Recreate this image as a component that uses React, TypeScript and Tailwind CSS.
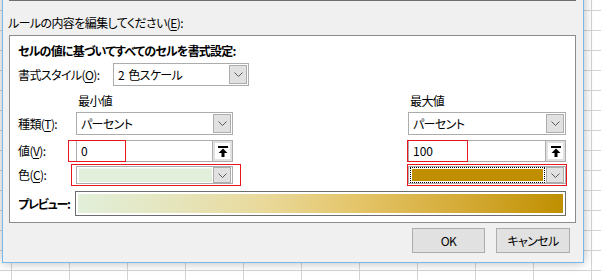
import React from "react";

const Chevron = () => (
  <svg width="9" height="5" viewBox="0 0 9 5">
    <path d="M0.5 0.5 L4.5 4.5 L8.5 0.5" fill="none" stroke="#5a5a5a" strokeWidth="1" />
  </svg>
);

const UpArrow = () => (
  <svg width="10" height="11" viewBox="0 0 10 11">
    <rect x="0" y="0" width="10" height="2" fill="#000" />
    <path d="M5 2.5 L9.5 7 L6.5 7 L6.5 11 L3.5 11 L3.5 7 L0.5 7 Z" fill="#000" />
  </svg>
);

function DropBtn({ h }: { h: string }) {
  return (
    <div className={`w-[18px] ${h} shrink-0 bg-[#e1e1e1] border border-[#adadad] flex items-center justify-center`}>
      <Chevron />
    </div>
  );
}

function Select({ w, children }: { w: string; children: React.ReactNode }) {
  return (
    <div className={`${w} h-[23px] border border-[#acacac] bg-white flex items-center p-px`}>
      <div className="flex-1 pl-[3px] text-[12px] leading-[16px] whitespace-nowrap">{children}</div>
      <DropBtn h="h-[19px]" />
    </div>
  );
}

function ValueBox({ w, value }: { w: string; value: string }) {
  return (
    <div className={`${w} h-[22px] flex`}>
      <div className="flex-1 border border-[#acacac] bg-white flex items-center pl-[4px] text-[12px] tracking-normal">{value}</div>
      <div className="w-[21px] h-full border border-[#adadad] bg-[#e1e1e1] -ml-px p-[2px]">
        <div className="w-full h-full bg-white flex items-center justify-center">
          <UpArrow />
        </div>
      </div>
    </div>
  );
}

function ColorBox({ w, swatch }: { w: string; swatch: React.ReactNode }) {
  return (
    <div className={`${w} h-[18px] border border-[#acacac] bg-white flex items-center p-px gap-px`}>
      {swatch}
      <DropBtn h="h-[16px]" />
    </div>
  );
}

const Key = ({ k }: { k: string }) => (
  <>
    (<span className="underline underline-offset-2">{k}</span>):
  </>
);

export default function App() {
  return (
    <div className="relative w-[601px] h-[280px] overflow-hidden bg-white bg-[linear-gradient(to_right,#d4d4d4_1px,transparent_1px),linear-gradient(to_bottom,#d4d4d4_1px,transparent_1px)] bg-[size:58px_20px] bg-[position:11px_10px] font-['Noto_Sans_CJK_JP','Noto_Sans',sans-serif] [font-feature-settings:'palt'] tracking-[-0.6px] text-black text-[12px]">
      <div className="absolute left-[2px] top-[-20px] w-[582px] h-[283px] border border-[#7ab8ea] bg-[#f0f0f0] pt-[19px] shadow-[0_0_10px_rgba(0,0,0,0.28)]">
        <div className="ml-[6px] w-[567px] h-px bg-[#6e6e6e]" />
        <div className="mt-[14px] h-[16px] leading-[16px] pl-[5px]">
          ルールの内容を編集してください<Key k="E" />
        </div>

        {/* rule description group */}
        <div className="mt-[4px] ml-[6px] w-[567px] h-[188px] border border-[#8c8c8c] bg-white pl-[8px] pt-[7px]">
          <div className="h-[16px] leading-[16px] font-bold tracking-[-0.8px]">セルの値に基づいてすべてのセルを書式設定:</div>

          <div className="mt-[4px] h-[23px] flex items-center">
            <div className="w-[95px]">
              書式スタイル<Key k="O" />
            </div>
            <Select w="w-[136px]">2&nbsp;&nbsp;色スケール</Select>
          </div>

          <div className="mt-[7px] h-[16px] leading-[16px] flex">
            <div className="w-[58px]" />
            <div className="w-[157px] pl-[2px]">最小値</div>
            <div className="w-[175px]" />
            <div className="w-[158px] pl-[2px]">最大値</div>
          </div>

          <div className="mt-[3px] h-[23px] flex items-center">
            <div className="w-[58px]">
              種類<Key k="T" />
            </div>
            <Select w="w-[157px]">パーセント</Select>
            <div className="w-[175px]" />
            <Select w="w-[158px]">パーセント</Select>
          </div>

          <div className="relative mt-[5px] h-[22px] flex items-center">
            <div className="w-[58px]">
              値<Key k="V" />
            </div>
            <ValueBox w="w-[157px]" value="0" />
            <div className="w-[175px]" />
            <ValueBox w="w-[158px]" value="100" />
            <div className="absolute left-[50px] top-0 w-[58px] h-[22px] border border-[#e8161d]" />
            <div className="absolute left-[389px] top-0 w-[61px] h-[22px] border border-[#e8161d]" />
          </div>

          <div className="relative mt-[2px] h-[22px] flex items-center">
            <div className="w-[58px]">
              色<Key k="C" />
            </div>
            <ColorBox
              w="w-[157px]"
              swatch={<div className="flex-1 h-[14px] ml-px bg-[#e2efda] border-t border-dotted border-[#f4fbff]" />}
            />
            <div className="w-[175px]" />
            <ColorBox
              w="w-[158px]"
              swatch={
                <div className="flex-1 h-[16px] border border-dotted border-black p-px">
                  <div className="w-full h-full bg-[#bf8f00]" />
                </div>
              }
            />
            <div className="absolute left-[53px] top-0 w-[170px] h-[22px] border border-[#e8161d]" />
            <div className="absolute left-[389px] top-0 w-[160px] h-[22px] border border-[#e8161d]" />
          </div>

          <div className="mt-[5px] h-[25px] flex items-center">
            <div className="w-[57px] font-bold whitespace-nowrap tracking-[-1.2px]">プレビュー:</div>
            <div className="w-[491px] h-[25px] border border-[#6d6d6d] bg-white p-[2px]">
              <div className="w-full h-full bg-[linear-gradient(to_right,#e2efda_0%,#e5e6bf_18%,#e9d99b_38%,#e4c468_58%,#d4aa35_80%,#bf8f00_100%)]" />
            </div>
          </div>
        </div>

        <div className="mt-[5px] pr-[13px] flex justify-end gap-[11px]">
          <button className="w-[73px] h-[25px] border border-[#adadad] bg-[#e1e1e1] text-[12px]">OK</button>
          <button className="w-[74px] h-[25px] border border-[#adadad] bg-[#e1e1e1] text-[12px]">キャンセル</button>
        </div>
      </div>
    </div>
  );
}
